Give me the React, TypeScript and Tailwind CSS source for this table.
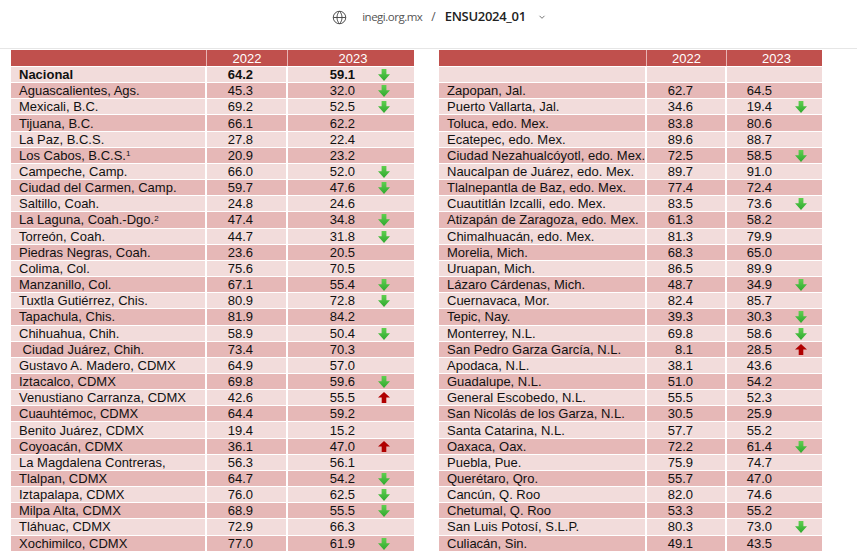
import React from "react";

type Row = { n: React.ReactNode; a: string; b: string; t?: "d" | "u"; bold?: boolean; blank?: boolean };

const left: Row[] = [
  { n: "Nacional", a: "64.2", b: "59.1", t: "d", bold: true },
  { n: "Aguascalientes, Ags.", a: "45.3", b: "32.0", t: "d" },
  { n: "Mexicali, B.C.", a: "69.2", b: "52.5", t: "d" },
  { n: "Tijuana, B.C.", a: "66.1", b: "62.2" },
  { n: "La Paz, B.C.S.", a: "27.8", b: "22.4" },
  { n: <>Los Cabos, B.C.S.<sup className="text-[8px] relative -top-[1px]">1</sup></>, a: "20.9", b: "23.2" },
  { n: "Campeche, Camp.", a: "66.0", b: "52.0", t: "d" },
  { n: "Ciudad del Carmen, Camp.", a: "59.7", b: "47.6", t: "d" },
  { n: "Saltillo, Coah.", a: "24.8", b: "24.6" },
  { n: <>La Laguna, Coah.-Dgo.<sup className="text-[8px] relative -top-[1px]">2</sup></>, a: "47.4", b: "34.8", t: "d" },
  { n: "Torreón, Coah.", a: "44.7", b: "31.8", t: "d" },
  { n: "Piedras Negras, Coah.", a: "23.6", b: "20.5" },
  { n: "Colima, Col.", a: "75.6", b: "70.5" },
  { n: "Manzanillo, Col.", a: "67.1", b: "55.4", t: "d" },
  { n: "Tuxtla Gutiérrez, Chis.", a: "80.9", b: "72.8", t: "d" },
  { n: "Tapachula, Chis.", a: "81.9", b: "84.2" },
  { n: "Chihuahua, Chih.", a: "58.9", b: "50.4", t: "d" },
  { n: "\u00a0Ciudad Juárez, Chih.", a: "73.4", b: "70.3" },
  { n: "Gustavo A. Madero, CDMX", a: "64.9", b: "57.0" },
  { n: "Iztacalco, CDMX", a: "69.8", b: "59.6", t: "d" },
  { n: "Venustiano Carranza, CDMX", a: "42.6", b: "55.5", t: "u" },
  { n: "Cuauhtémoc, CDMX", a: "64.4", b: "59.2" },
  { n: "Benito Juárez, CDMX", a: "19.4", b: "15.2" },
  { n: "Coyoacán, CDMX", a: "36.1", b: "47.0", t: "u" },
  { n: "La Magdalena Contreras,", a: "56.3", b: "56.1" },
  { n: "Tlalpan, CDMX", a: "64.7", b: "54.2", t: "d" },
  { n: "Iztapalapa, CDMX", a: "76.0", b: "62.5", t: "d" },
  { n: "Milpa Alta, CDMX", a: "68.9", b: "55.5", t: "d" },
  { n: "Tláhuac, CDMX", a: "72.9", b: "66.3" },
  { n: "Xochimilco, CDMX", a: "77.0", b: "61.9", t: "d" },
];

const right: Row[] = [
  { n: "", a: "", b: "", blank: true },
  { n: "Zapopan, Jal.", a: "62.7", b: "64.5" },
  { n: "Puerto Vallarta, Jal.", a: "34.6", b: "19.4", t: "d" },
  { n: "Toluca, edo. Mex.", a: "83.8", b: "80.6" },
  { n: "Ecatepec, edo. Mex.", a: "89.6", b: "88.7" },
  { n: "Ciudad Nezahualcóyotl, edo. Mex.", a: "72.5", b: "58.5", t: "d" },
  { n: "Naucalpan de Juárez, edo. Mex.", a: "89.7", b: "91.0" },
  { n: "Tlalnepantla de Baz, edo. Mex.", a: "77.4", b: "72.4" },
  { n: "Cuautitlán Izcalli, edo. Mex.", a: "83.5", b: "73.6", t: "d" },
  { n: "Atizapán de Zaragoza, edo. Mex.", a: "61.3", b: "58.2" },
  { n: "Chimalhuacán, edo. Mex.", a: "81.3", b: "79.9" },
  { n: "Morelia, Mich.", a: "68.3", b: "65.0" },
  { n: "Uruapan, Mich.", a: "86.5", b: "89.9" },
  { n: "Lázaro Cárdenas, Mich.", a: "48.7", b: "34.9", t: "d" },
  { n: "Cuernavaca, Mor.", a: "82.4", b: "85.7" },
  { n: "Tepic, Nay.", a: "39.3", b: "30.3", t: "d" },
  { n: "Monterrey, N.L.", a: "69.8", b: "58.6", t: "d" },
  { n: "San Pedro Garza García, N.L.", a: "8.1", b: "28.5", t: "u" },
  { n: "Apodaca, N.L.", a: "38.1", b: "43.6" },
  { n: "Guadalupe, N.L.", a: "51.0", b: "54.2" },
  { n: "General Escobedo, N.L.", a: "55.5", b: "52.3" },
  { n: "San Nicolás de los Garza, N.L.", a: "30.5", b: "25.9" },
  { n: "Santa Catarina, N.L.", a: "57.7", b: "55.2" },
  { n: "Oaxaca, Oax.", a: "72.2", b: "61.4", t: "d" },
  { n: "Puebla, Pue.", a: "75.9", b: "74.7" },
  { n: "Querétaro, Qro.", a: "55.7", b: "47.0" },
  { n: "Cancún, Q. Roo", a: "82.0", b: "74.6" },
  { n: "Chetumal, Q. Roo", a: "53.3", b: "55.2" },
  { n: "San Luis Potosí, S.L.P.", a: "80.3", b: "73.0", t: "d" },
  { n: "Culiacán, Sin.", a: "49.1", b: "43.5" },
];

function Arrow({ t }: { t: "d" | "u" }) {
  if (t === "d") {
    return (
      <svg width="12" height="12" viewBox="0 0 12 12">
        <defs>
          <linearGradient id="gd" x1="0" y1="0" x2="0" y2="1">
            <stop offset="0" stopColor="#5fd04f" />
            <stop offset="1" stopColor="#2fa82f" />
          </linearGradient>
        </defs>
        <path d="M3.6 0 H8.4 V5.2 H12 L6 12 L0 5.2 H3.6 Z" fill="url(#gd)" />
      </svg>
    );
  }
  return (
    <svg width="12" height="11" viewBox="0 0 12 11">
      <path d="M6 0 L12 5.6 H8.3 V11 H3.7 V5.6 H0 Z" fill="#b00000" />
    </svg>
  );
}

function Table({
  rows,
  w,
}: {
  rows: Row[];
  w: { name: number; c1: number; c2: number; n1: number; n2: number; ar: number };
}) {
  return (
    <div className="flex flex-col" style={{ width: w.name + w.c1 + w.c2 }}>
      <div className="flex h-[16px] bg-[#c0504d] text-white">
        <div className="border-r border-[#e8b4b3]" style={{ width: w.name }} />
        <div className="flex items-center justify-center border-r border-[#e8b4b3]" style={{ width: w.c1 }}>
          2022
        </div>
        <div className="flex items-center justify-center pl-[4px]" style={{ width: w.c2 }}>
          2023
        </div>
      </div>
      {rows.map((r, i) => (
        <div
          key={i}
          className={`flex h-[16.17px] border-t border-white ${i % 2 === 0 ? "bg-[#f2dcdb]" : "bg-[#e6b8b7]"} ${r.bold ? "font-bold" : ""}`}
        >
          <div className="flex items-center pl-[8px] border-r-2 border-white whitespace-nowrap overflow-hidden" style={{ width: w.name }}>
            {r.n}
          </div>
          <div className="flex items-center border-r-2 border-white" style={{ width: w.c1 }}>
            <span className="inline-block text-right" style={{ width: w.n1 }}>
              {r.a}
            </span>
          </div>
          <div className="flex items-center relative" style={{ width: w.c2 }}>
            <span className="inline-block text-right" style={{ width: w.n2 }}>
              {r.b}
            </span>
            {r.t && (
              <span className="absolute top-[2px]" style={{ left: w.ar - 6 }}>
                <Arrow t={r.t} />
              </span>
            )}
          </div>
        </div>
      ))}
    </div>
  );
}

export default function App() {
  return (
    <div className="w-[857px] h-[552px] bg-white overflow-hidden">
      <div className="h-[49px] border-b border-[#e6e6e6] flex items-start justify-center">
        <div className="flex items-center h-[34px] pl-[22px] font-['Open_Sans','Noto_Sans',sans-serif]">
          <svg width="15" height="15" viewBox="0 0 24 24" fill="none" stroke="#444" strokeWidth="1.5" className="mr-[15px]">
            <circle cx="12" cy="12" r="10" />
            <path d="M2 12h20" />
            <path d="M12 2c2.8 2.8 4 6.4 4 10s-1.2 7.2-4 10c-2.8-2.8-4-6.4-4-10s1.2-7.2 4-10z" />
          </svg>
          <span className="text-[11.5px] text-[#555] tracking-[-0.5px]">inegi.org.mx</span>
          <span className="text-[12px] text-[#555] mx-[9px]">/</span>
          <span className="text-[13px] font-semibold text-[#222] tracking-[-0.3px]">ENSU2024_01</span>
          <svg width="10" height="10" viewBox="0 0 10 10" className="ml-[11px]" fill="none" stroke="#777" strokeWidth="1">
            <path d="M2.5 3.8 L5 6.3 L7.5 3.8" />
          </svg>
        </div>
      </div>
      <div className="flex pl-[11px] pt-[1px] gap-[25px] text-[13px] text-[#111] leading-none font-['Liberation_Sans',Arial,sans-serif]">
        <Table rows={left} w={{ name: 196, c1: 81, c2: 126, n1: 46, n2: 67, ar: 96 }} />
        <Table rows={right} w={{ name: 208, c1: 80, c2: 95, n1: 46, n2: 45, ar: 74 }} />
      </div>
    </div>
  );
}
